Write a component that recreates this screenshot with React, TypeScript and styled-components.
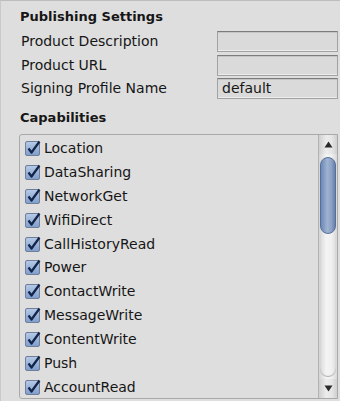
import React from "react";
import styled, { createGlobalStyle } from "styled-components";

const Global = createGlobalStyle`
  html, body { margin: 0; padding: 0; background: #dedede; }
  body { font-family: "DejaVu Sans", "Liberation Sans", sans-serif; }
`;

const Panel = styled.div`
  width: 340px;
  height: 401px;
  box-sizing: border-box;
  background: #dedede;
  border-top: 1px solid #bdbdbd;
  border-left: 1px solid #c9c9c9;
  padding: 0 2px 0 19px;
  color: #161616;
  font-size: 14px;
  overflow: hidden;
  display: flex;
  flex-direction: column;
`;

const Heading = styled.div<{ $top: number }>`
  font-weight: bold;
  font-size: 13px;
  height: 17px;
  line-height: 17px;
  margin-top: ${(p) => p.$top}px;
`;

const Form = styled.div`
  display: grid;
  grid-template-columns: 1fr 121px;
  row-gap: 2.5px;
  margin-top: 6px;
`;

const Label = styled.div`
  height: 21px;
  line-height: 21px;
  padding-left: 1px;
  white-space: nowrap;
`;

const Field = styled.div`
  height: 21px;
  box-sizing: border-box;
  background: #dadada;
  border: 1px solid #a2a2a2;
  border-top-color: #7c7c7c;
  box-shadow: inset 0 1px 0 #c4c4c4, inset 0 -1px 0 #ececec;
  padding: 0 4px;
  line-height: 19px;
  font-size: 14px;
`;

const ListBox = styled.div`
  margin-top: 8px;
  margin-left: -1px;
  height: 265px;
  box-sizing: border-box;
  border: 1px solid #a9a9a9;
  border-radius: 3px 0 0 3px;
  display: flex;
`;

const Items = styled.div`
  flex: 1;
  padding: 1px 0 0 5px;
  display: flex;
  flex-direction: column;
  overflow: hidden;
`;

const Item = styled.div`
  height: 23.9px;
  display: flex;
  align-items: center;
  gap: 3px;
  white-space: nowrap;
  flex-shrink: 0;
`;

const ScrollBar = styled.div`
  width: 18px;
  border-left: 1px solid #b2b2b2;
  background: linear-gradient(to right, #d4d4d4, #f4f4f4 40%, #f0f0f0 70%, #d8d8d8);
  display: flex;
  flex-direction: column;
  align-items: center;
`;

const Arrow = styled.div`
  height: 19px;
  width: 100%;
  display: flex;
  align-items: center;
  justify-content: center;
  flex-shrink: 0;
  background: linear-gradient(to right, #cfcfcf, #ececec 40%, #e6e6e6 70%, #cfcfcf);
`;

const Track = styled.div`
  flex: 1;
  width: 100%;
  padding: 3px 1px 0 1px;
  box-sizing: border-box;
  display: flex;
  flex-direction: column;
`;

const Thumb = styled.div`
  height: 77px;
  border-radius: 8px;
  border: 1px solid #56709d;
  box-sizing: border-box;
  background: linear-gradient(to right, #6e89b6, #9fb3d2 45%, #8aa0c4 75%, #6780ab);
`;

const TrackEnd = styled.div`
  flex: 1;
  border-radius: 0 0 8px 8px;
  margin-bottom: 2px;
  box-shadow: inset 0 -1px 1px #b0b0b0;
`;

const Check = () => (
  <svg width="16" height="16" viewBox="0 0 16 16">
    <defs>
      <linearGradient id="cbg" x1="0" y1="0" x2="0" y2="1">
        <stop offset="0" stopColor="#b7cbe8" />
        <stop offset="1" stopColor="#7e9dcc" />
      </linearGradient>
    </defs>
    <rect x="0.5" y="1.5" width="14" height="14" rx="1.5" fill="url(#cbg)" stroke="#6f7f98" />
    <path d="M3.5 8.5 L6.5 12.5 L14.5 1.5" fill="none" stroke="#142448" strokeWidth="2.2" strokeLinejoin="round" />
  </svg>
);

const items = [
  "Location",
  "DataSharing",
  "NetworkGet",
  "WifiDirect",
  "CallHistoryRead",
  "Power",
  "ContactWrite",
  "MessageWrite",
  "ContentWrite",
  "Push",
  "AccountRead",
];

export default function App() {
  return (
    <>
      <Global />
      <Panel>
        <Heading $top={7}>Publishing Settings</Heading>
        <Form>
          <Label>Product Description</Label>
          <Field />
          <Label>Product URL</Label>
          <Field />
          <Label>Signing Profile Name</Label>
          <Field>default</Field>
        </Form>
        <Heading $top={10}>Capabilities</Heading>
        <ListBox>
          <Items>
            {items.map((it) => (
              <Item key={it}>
                <Check />
                <span>{it}</span>
              </Item>
            ))}
          </Items>
          <ScrollBar>
            <Arrow>
              <svg width="9" height="7" viewBox="0 0 9 7">
                <path d="M4.5 0.5 L8.5 6.5 L0.5 6.5 Z" fill="#2a2a2a" />
              </svg>
            </Arrow>
            <Track>
              <Thumb />
              <TrackEnd />
            </Track>
            <Arrow>
              <svg width="9" height="7" viewBox="0 0 9 7">
                <path d="M0.5 0.5 L8.5 0.5 L4.5 6.5 Z" fill="#2a2a2a" />
              </svg>
            </Arrow>
          </ScrollBar>
        </ListBox>
      </Panel>
    </>
  );
}
